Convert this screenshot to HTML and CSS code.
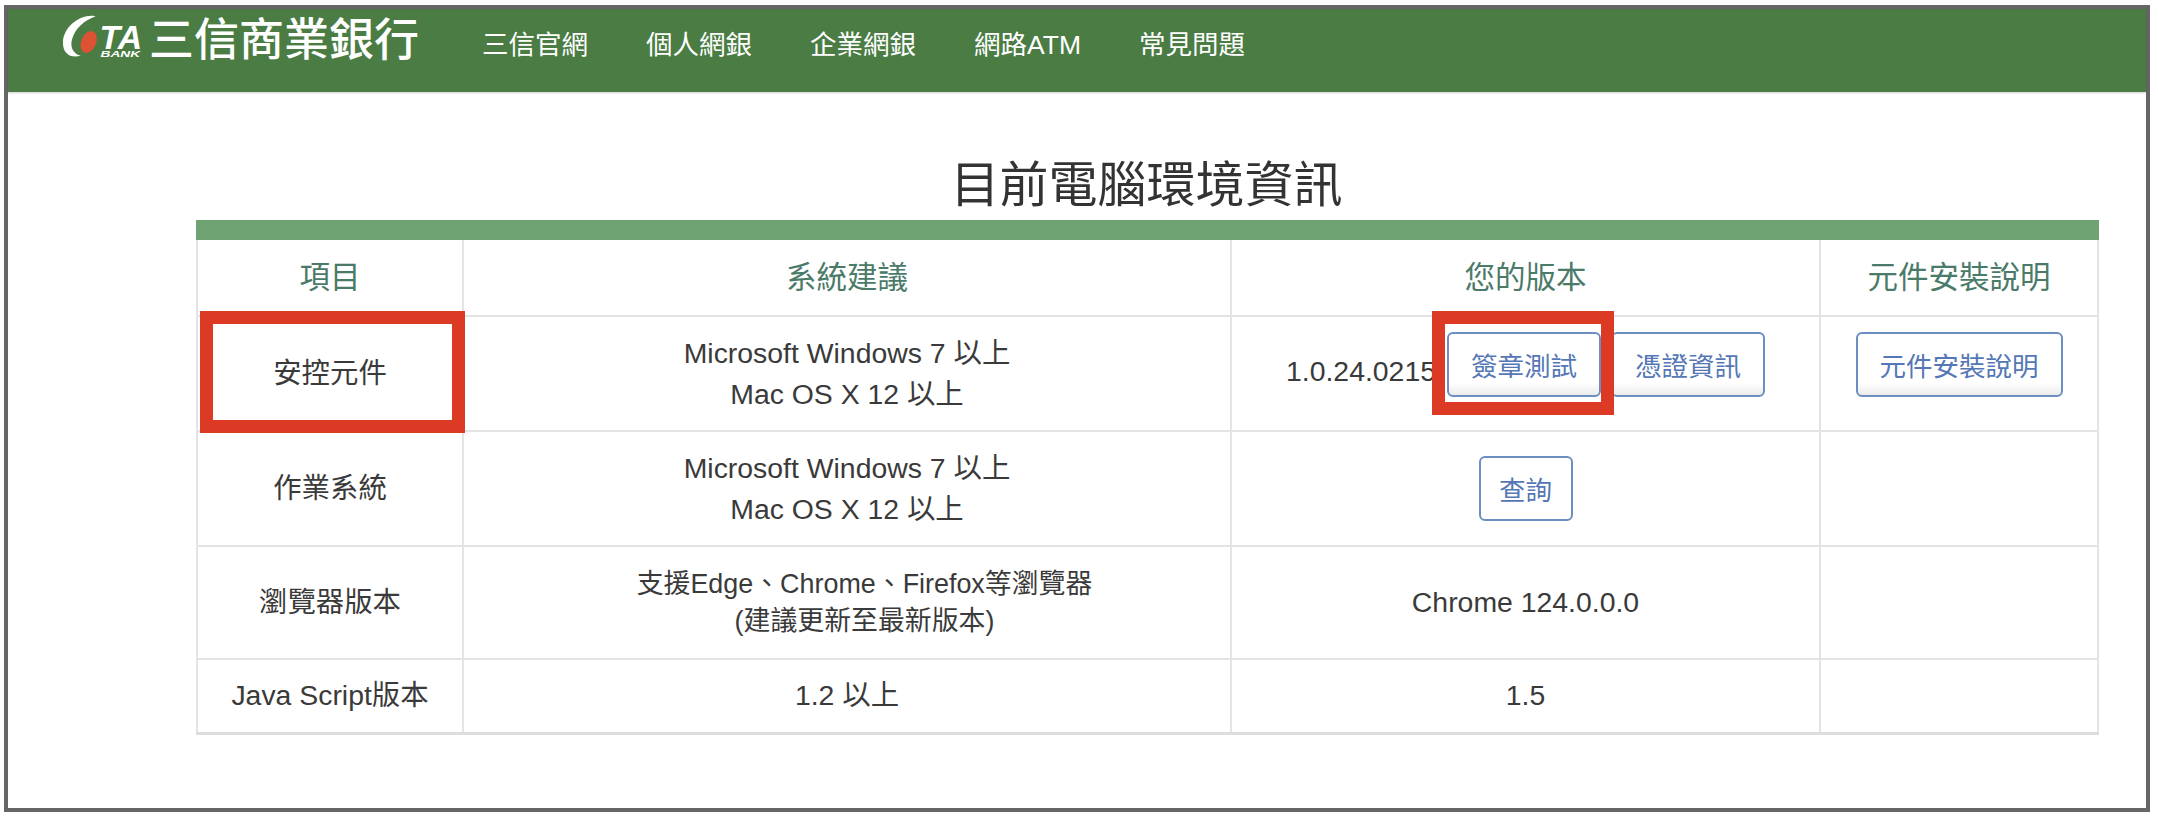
FILE: index.html
```html
<!DOCTYPE html>
<html lang="zh-Hant">
<head>
<meta charset="utf-8">
<title>目前電腦環境資訊</title>
<link rel="stylesheet" href="styles.css">
</head>
<body>
<div class="frame">
  <header class="topbar">
    <div class="brand">
      <svg class="logo" viewBox="0 0 90 50" width="89" height="50" aria-label="CTA BANK">
        <path class="logo-white" d="M36 4C22 1 3 14 3 31C3 41 10 47 21 44C14 42 10 36 12 28C15 16 25 8 36 4Z"/>
        <ellipse class="logo-red" cx="29" cy="30" rx="7.5" ry="11.5" transform="rotate(22 29 30)"/>
        <text class="logo-ta" x="40" y="37" textLength="43" lengthAdjust="spacingAndGlyphs">TA</text>
        <text class="logo-bank" x="41" y="45" textLength="40" lengthAdjust="spacingAndGlyphs">BANK</text>
      </svg>
      <span class="bank-name">三信商業銀行</span>
    </div>
    <nav class="nav">
      <a>三信官網</a>
      <a>個人網銀</a>
      <a>企業網銀</a>
      <a>網路ATM</a>
      <a>常見問題</a>
    </nav>
  </header>
  <main class="content">
    <h1 class="title">目前電腦環境資訊</h1>
    <table class="info">
      <colgroup>
        <col class="c1"><col class="c2"><col class="c3"><col class="c4">
      </colgroup>
      <thead>
        <tr class="r-head"><th>項目</th><th>系統建議</th><th>您的版本</th><th>元件安裝說明</th></tr>
      </thead>
      <tbody>
        <tr class="r-1">
          <td>安控元件</td>
          <td>Microsoft Windows 7 以上<br>Mac OS X 12 以上</td>
          <td><span class="ver">1.0.24.0215</span><button class="btn">簽章測試</button><button class="btn">憑證資訊</button></td>
          <td><button class="btn btn-wide">元件安裝說明</button></td>
        </tr>
        <tr class="r-2">
          <td>作業系統</td>
          <td>Microsoft Windows 7 以上<br>Mac OS X 12 以上</td>
          <td><button class="btn btn-small">查詢</button></td>
          <td></td>
        </tr>
        <tr class="r-3">
          <td>瀏覽器版本</td>
          <td class="tight">支援Edge、Chrome、Firefox等瀏覽器<br>(建議更新至最新版本)</td>
          <td>Chrome 124.0.0.0</td>
          <td></td>
        </tr>
        <tr class="r-4">
          <td>Java Script版本</td>
          <td>1.2 以上</td>
          <td>1.5</td>
          <td></td>
        </tr>
      </tbody>
    </table>
  </main>
  <div class="mark mark-a"></div>
  <div class="mark mark-b"></div>
</div>
</body>
</html>
```
FILE: styles.css
```css
* { box-sizing: border-box; }
html, body { margin: 0; padding: 0; background: #fff; }
body {
  font-family: "Liberation Sans", "Noto Sans CJK TC", sans-serif;
  color: #3a3a3a;
  font-size: 28px;
  overflow: hidden;
}
.frame {
  position: relative;
  width: 2146px;
  height: 807px;
  margin: 5px 0 0 4px;
  border: 4px solid #666;
  background: #fff;
}
.topbar {
  display: flex;
  align-items: flex-start;
  height: 83px;
  background: #4a7c44;
  box-shadow: 0 1px 2px rgba(0, 0, 0, 0.2);
  padding-left: 52px;
  color: #fff;
}
.brand { display: flex; align-items: flex-start; padding-top: 3px; }
.logo { display: block; }
.logo-white { fill: #fff; }
.logo-red { fill: #dd5232; }
.logo-ta { fill: #fff; font: italic bold 33px "Liberation Sans", sans-serif; }
.logo-bank { fill: #fff; font: italic bold 10px "Liberation Sans", sans-serif; }
.bank-name {
  font-size: 45px;
  line-height: 58px;
  font-weight: 500;
  white-space: nowrap;
}
.nav {
  display: flex;
  gap: 58px;
  margin-left: 63px;
  padding-top: 17px;
  font-size: 26.5px;
  line-height: 38px;
  white-space: nowrap;
}
.content { padding: 0 0 0 188px; }
.title {
  margin: 0;
  height: 128px;
  padding-top: 63px;
  text-align: center;
  width: 1901px;
  font-size: 49px;
  line-height: 60px;
  font-weight: 400;
  color: #333;
}
.info {
  width: 1901px;
  table-layout: fixed;
  border-collapse: collapse;
  border-top: 20px solid #6fa373;
  border-bottom: 3px solid #ddd;
}
.c1 { width: 266px; }
.c2 { width: 768px; }
.c3 { width: 589px; }
.c4 { width: 278px; }
.info th, .info td {
  border: 2px solid #e4e4e4;
  padding: 0;
  text-align: center;
  vertical-align: middle;
  line-height: 41px;
  font-size: 28.4px;
  font-weight: 400;
}
.info th { color: #4a7a68; font-size: 30.5px; }
.info thead th { border-top: 0; }
.info .tight { font-size: 26.9px; line-height: 37px; padding-left: 35px; }
.r-head { height: 86px; }
.r-1 { height: 115px; }
.r-2 { height: 115px; }
.r-3 { height: 113px; }
.r-4 { height: 74px; }
.ver { margin-right: 11px; }
.btn {
  height: 65px;
  width: 154px;
  padding: 0;
  margin: 0;
  vertical-align: middle;
  font-family: inherit;
  font-size: 26.5px;
  color: #5577b5;
  background: linear-gradient(#fff 80%, #ececec);
  border: 2px solid #6a8fc0;
  border-radius: 6px;
}
.r-1 .btn { margin-bottom: 18px; }
.btn + .btn { margin-left: 10px; }
.btn-wide { width: 207px; }
.btn-small { width: 94px; background: #fff; }
.mark {
  position: absolute;
  border: 13px solid #dc3a24;
  background: transparent;
}
.mark-a { left: 192px; top: 302px; width: 265px; height: 122px; }
.mark-b { left: 1424px; top: 302px; width: 182px; height: 104px; }
```
